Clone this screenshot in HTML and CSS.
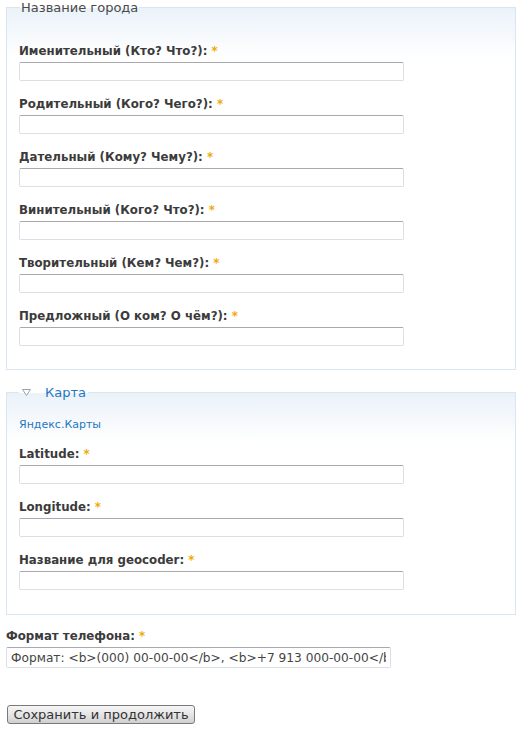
FILE: index.html
```html
<!DOCTYPE html>
<html lang="ru">
<head>
<meta charset="utf-8">
<link rel="stylesheet" href="styles.css">
</head>
<body>
<form class="form">
  <fieldset class="group">
    <legend class="group-title">Название города</legend>
    <div class="item"><label class="lbl">Именительный (Кто? Что?): <span class="req">*</span></label><input class="txt" type="text"></div>
    <div class="item"><label class="lbl">Родительный (Кого? Чего?): <span class="req">*</span></label><input class="txt" type="text"></div>
    <div class="item"><label class="lbl">Дательный (Кому? Чему?): <span class="req">*</span></label><input class="txt" type="text"></div>
    <div class="item"><label class="lbl">Винительный (Кого? Что?): <span class="req">*</span></label><input class="txt" type="text"></div>
    <div class="item"><label class="lbl">Творительный (Кем? Чем?): <span class="req">*</span></label><input class="txt" type="text"></div>
    <div class="item"><label class="lbl">Предложный (О ком? О чём?): <span class="req">*</span></label><input class="txt" type="text"></div>
  </fieldset>

  <fieldset class="group group-map">
    <legend class="group-title map-title"><span class="tri"><svg width="9" height="7" viewBox="0 0 9 7"><path d="M0.5 0.5 H8.5 L4.5 6.5 Z" fill="#fff" stroke="#9aa3ab" stroke-width="1"/></svg></span><span class="map-link">Карта</span></legend>
    <div class="ymaps"><a class="ylink">Яндекс.Карты</a></div>
    <div class="item"><label class="lbl">Latitude: <span class="req">*</span></label><input class="txt" type="text"></div>
    <div class="item"><label class="lbl">Longitude: <span class="req">*</span></label><input class="txt" type="text"></div>
    <div class="item"><label class="lbl">Название для geocoder: <span class="req">*</span></label><input class="txt" type="text"></div>
  </fieldset>

  <div class="item phone"><label class="lbl">Формат телефона: <span class="req">*</span></label><input class="txt txt-phone" type="text" value="Формат: <b>(000) 00-00-00</b>, <b>+7 913 000-00-00</b>"></div>

  <div class="actions"><button class="btn" type="button">Сохранить и продолжить</button></div>
</form>
</body>
</html>
```
FILE: styles.css
```css
html, body {
  margin: 0;
  padding: 0;
  background: #fff;
}
body {
  font-family: "DejaVu Sans", Verdana, sans-serif;
  color: #3b3b3b;
  font-size: 12px;
}
.form {
  padding: 0 6px;
}
.group {
  margin: 0;
  width: 510px;
  box-sizing: border-box;
  border: 1px solid #d9e6f1;
  padding: 29px 12px 7px 12px;
  background: linear-gradient(to bottom, #eaf2f9 0px, #ffffff 50px);
}
.group-title {
  font-size: 13px;
  color: #4a4a4a;
  padding: 0 1px;
  margin-left: 1px;
  line-height: 15px;
}
.item {
  display: flex;
  flex-direction: column;
  align-items: flex-start;
  margin-bottom: 16px;
}
.lbl {
  font-weight: bold;
  font-size: 11.8px;
  line-height: 15px;
  color: #3b3b3b;
  margin-bottom: 3px;
}
.req {
  color: #f2a900;
}
.txt {
  box-sizing: border-box;
  width: 385px;
  height: 19px;
  margin: 0;
  border: 1px solid #dcdfe3;
  border-top-color: #a8a8ad;
  border-radius: 2px;
  background: #fff;
  padding: 0 3px;
  font-family: "DejaVu Sans", Verdana, sans-serif;
  font-size: 12px;
  color: #444;
}
.group-map {
  margin-top: 15px;
  padding-top: 18px;
  padding-bottom: 8px;
}
.map-title {
  display: flex;
  align-items: center;
  padding: 0 1px;
  margin-left: 0;
}
.tri {
  display: inline-flex;
  width: 25px;
  padding-left: 2px;
  box-sizing: border-box;
  align-items: center;
}
.map-link {
  color: #1f77c2;
  padding-right: 1px;
}
.ymaps {
  font-size: 11px;
  line-height: 14px;
  margin-bottom: 15px;
}
.ylink {
  color: #1f77c2;
  text-decoration: none;
}
.phone {
  margin-top: 14px;
  margin-bottom: 0;
}
.phone .lbl {
  margin-bottom: 3px;
}
.txt-phone {
  height: 21px;
  padding: 0 4px;
  font-size: 12.2px;
}
.actions {
  padding-top: 37px;
  padding-left: 1px;
}
.btn {
  height: 19px;
  width: 188px;
  padding: 0;
  border: 1px solid #7a7a7a;
  border-radius: 3px;
  background: linear-gradient(to bottom, #f6f6f6 0%, #e2e2e2 60%, #cfcfcf 100%);
  font-family: "DejaVu Sans", Verdana, sans-serif;
  font-size: 13px;
  color: #333;
  line-height: 16px;
}
```
